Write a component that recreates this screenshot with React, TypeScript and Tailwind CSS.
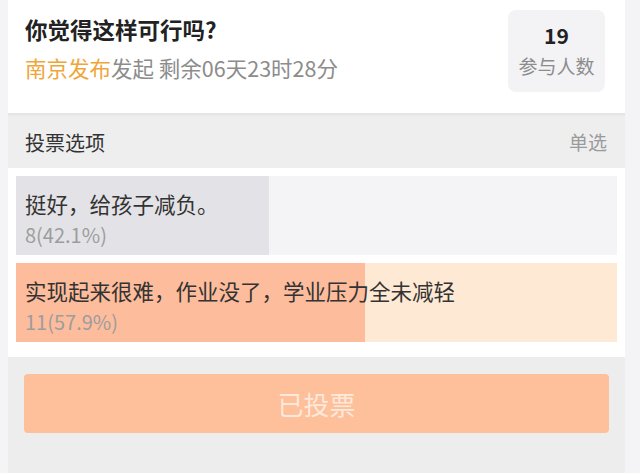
import React from "react";

const font = { fontFamily: '"Noto Sans CJK SC", "Noto Sans", sans-serif' };

function Option({ text, count, pct, fill, bg }: { text: string; count: string; pct: number; fill: string; bg: string }) {
  return (
    <div className={`relative h-[79px] ${bg}`}>
      <div className={`absolute left-0 top-0 h-full ${fill}`} style={{ width: `${pct}%` }} />
      <div className="relative pl-[9px] pt-[14px]">
        <div className="text-[21.5px] leading-[28px] text-[#333333]">{text}</div>
        <div className="mt-[3px] text-[20px] leading-[28px] text-[#9d9d9d]">{count}</div>
      </div>
    </div>
  );
}

export default function App() {
  return (
    <div className="w-[640px] h-[473px] overflow-hidden bg-[#f4f4f6] pl-[8px]" style={font}>
      <div className="w-[617px] h-full flex flex-col">
        <div className="h-[113px] bg-white flex justify-between pl-[17px] pr-[20px] pt-[10px] shrink-0">
          <div>
            <div className="mt-[4px] text-[22.5px] leading-[30px] font-bold text-[#222222]">你觉得这样可行吗?</div>
            <div className="mt-[9px] text-[21.5px] leading-[30px] text-[#8c8c8c]">
              <span className="text-[#f0a53a]">南京发布</span>发起 剩余06天23时28分
            </div>
          </div>
          <div className="w-[97px] h-[82px] rounded-[8px] bg-[#f3f3f5] flex flex-col items-center pt-[11px]">
            <div className="text-[21px] leading-[28px] font-bold text-[#222222]">19</div>
            <div className="mt-[4px] text-[19px] leading-[26px] text-[#8c8c8c]">参与人数</div>
          </div>
        </div>
        <div className="h-[4px] bg-gradient-to-b from-[#e2e2e4] to-[#eeeeef] shrink-0" />
        <div className="h-[51px] bg-[#eeeeef] flex items-center justify-between pl-[17px] pr-[18px] shrink-0">
          <span className="text-[20px] text-[#333333]">投票选项</span>
          <span className="text-[19px] text-[#9a9a9a]">单选</span>
        </div>
        <div className="bg-white px-[8px] pt-[8px] pb-[15px] flex flex-col gap-[8px] shrink-0">
          <Option text="挺好，给孩子减负。" count="8(42.1%)" pct={42.1} fill="bg-[#e3e3e7]" bg="bg-[#f4f4f7]" />
          <Option text="实现起来很难，作业没了，学业压力全未减轻" count="11(57.9%)" pct={58} fill="bg-[#fdbc9c]" bg="bg-[#fde9d4]" />
        </div>
        <div className="flex-1 bg-[#ededed] px-[16px] pt-[17px]">
          <div className="h-[59px] rounded-[4px] bg-[#febf9b] flex items-center justify-center text-[26px] text-[#fde9da]">
            已投票
          </div>
        </div>
      </div>
    </div>
  );
}
